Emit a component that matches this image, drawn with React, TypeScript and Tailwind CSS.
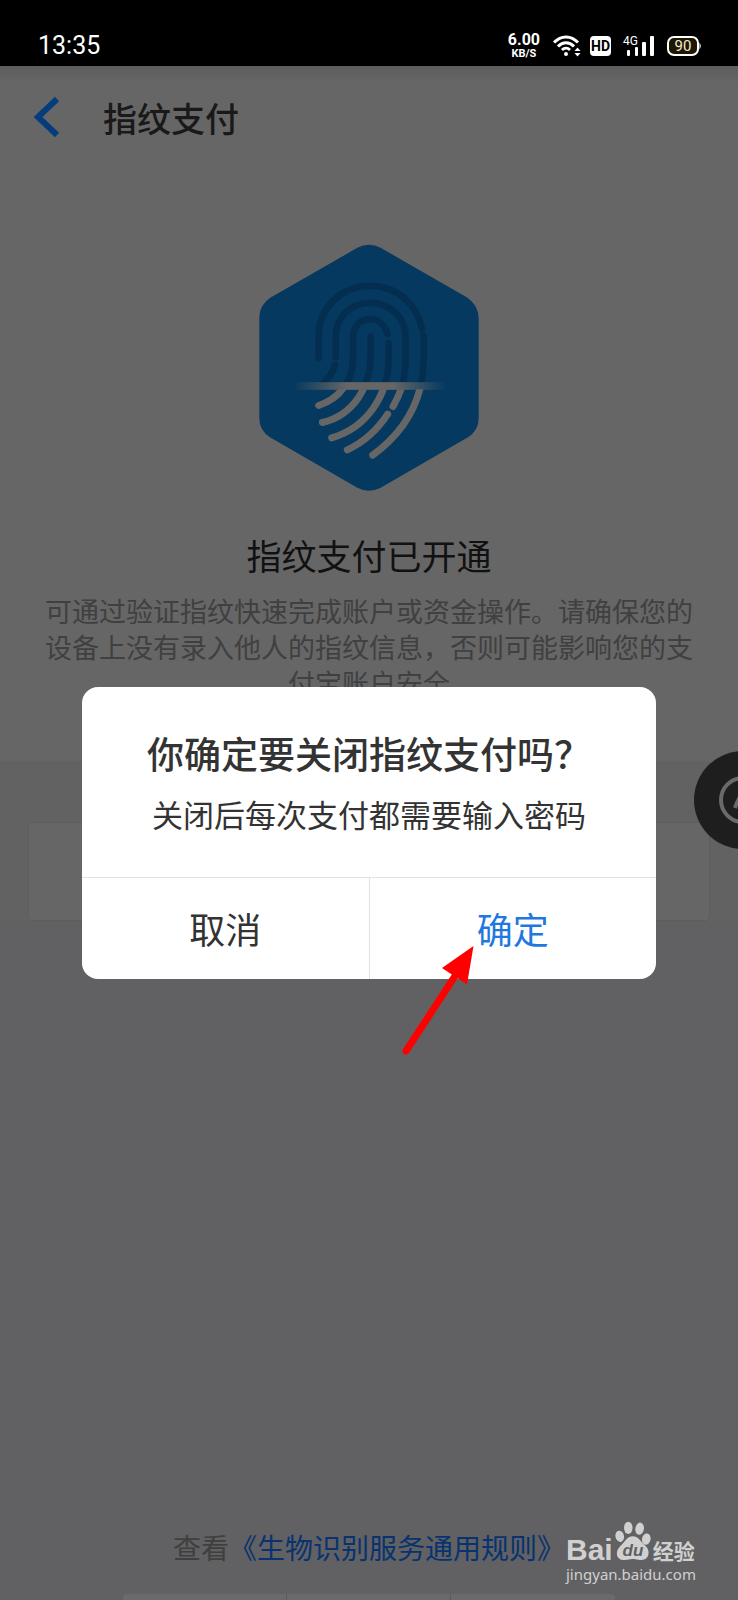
import type { ReactNode } from "react"

const StatusBar = () => {
    return (
        <header className="h-[66px] bg-black text-white flex items-center justify-between pt-[26px] pl-[38px] pr-9 font-['Roboto','Noto_Sans_CJK_SC',sans-serif]">
            <span className="text-[25px] leading-6">13:35</span>
            <div className="flex items-center">
                <div className="flex flex-col items-center font-bold mr-3">
                    <span className="text-[16px] leading-4">6.00</span>
                    <span className="text-[11px] leading-3">KB/S</span>
                </div>
                <svg width="30" height="22" viewBox="0 0 30 22" fill="none" stroke="#fff" strokeWidth="3" className="mr-2">
                    <path d="M2 7.5C9 0 19 0 26 7.5" />
                    <path d="M6 11.5C11 6.5 17 6.5 22 11.5" />
                    <path d="M10 15C12.5 12.5 15.5 12.5 18 15" />
                    <circle cx="14" cy="19" r="2" fill="#fff" stroke="none" />
                    <path d="M22.500 16l3-3.500 3 3.500zM22.500 18l3 3.500 3-3.500z" fill="#fff" stroke="none" />
                </svg>
                <span className="w-[21px] h-5 bg-white text-black rounded-sm text-[14px] leading-5 font-bold text-center mr-3">HD</span>
                <svg width="31" height="22" viewBox="0 0 31 22" fill="#fff" className="mr-3">
                    <text x="0" y="10" fontSize="12">4G</text>
                    <rect x="4" y="15" width="3" height="6" rx="1" />
                    <rect x="12" y="12" width="3" height="9" rx="1" />
                    <rect x="19" y="7" width="4" height="14" rx="1" />
                    <rect x="27" y="1" width="4" height="20" rx="1" />
                </svg>
                <svg width="36" height="22" viewBox="0 0 36 22">
                    <rect x="2" y="2" width="30" height="18" rx="6" fill="#1d1604" stroke="#fff" strokeWidth="2" />
                    <path d="M33.500 7.500Q36 11 33.500 14.500Z" fill="#fff" />
                    <text x="17" y="16" fontSize="15" textAnchor="middle" fill="#f5ecd0">90</text>
                </svg>
            </div>
        </header>
    )
}

const FingerprintLines = () => {
    return (
        <>
            <path d="M234 385V320C234 235 300 168 390 168C470 168 530 225 544 298" />
            <path d="M549 318V385C549 500 500 600 396 676" />
            <path d="M285 382V320C285 265 328 219 388 219C452 219 495 265 495 320V380C495 450 480 490 457 530" />
            <path d="M441 553C410 600 370 637 320 660" />
            <path d="M441 312C432 285 412 268 388 268C358 268 337 292 337 320V385C337 450 300 505 234 527" />
            <path d="M390 320V375C390 470 340 555 245 578" />
            <path d="M444 340V385C444 500 375 595 273 624" />
        </>
    )
}

const FingerprintBadge = () => {
    return (
        <svg width="220" height="247" viewBox="55 43 660 740" fill="none" strokeLinecap="round">
            <defs>
                <clipPath id="upper"><rect x="55" y="43" width="660" height="415" /></clipPath>
                <clipPath id="lower"><rect x="55" y="478" width="660" height="305" /></clipPath>
                <linearGradient id="scan">
                    <stop offset="0" stopColor="#666" stopOpacity="0" />
                    <stop offset="0.35" stopColor="#666" />
                    <stop offset="0.65" stopColor="#666" />
                    <stop offset="1" stopColor="#666" stopOpacity="0" />
                </linearGradient>
            </defs>
            <path
                d="M350 54Q385 35 420 54L678 202Q714 225 714 265V565Q714 602 682 622L420 774Q385 792 350 774L88 622Q56 602 56 565V262Q56 225 90 203Z"
                fill="#06395f"
            />
            <g clipPath="url(#upper)" stroke="#042e50" strokeWidth="20">
                <FingerprintLines />
                <path d="M283 405C276 432 262 450 240 466" />
            </g>
            <g clipPath="url(#lower)" stroke="#666" strokeWidth="21">
                <FingerprintLines />
            </g>
            <rect x="160" y="457" width="455" height="23" fill="url(#scan)" />
        </svg>
    )
}

const DialogButton = ({ className, children }: { className: string; children: ReactNode }) => {
    return (
        <button type="button" className={`flex-1 h-[101px] pb-[2px] text-[36px] leading-[48px] cursor-pointer ${className}`}>
            {children}
        </button>
    )
}

const ConfirmDialog = () => {
    return (
        <div className="absolute inset-0 top-[66px] flex items-center justify-center px-[82px]">
            <div role="dialog" aria-labelledby="dialog-title" className="relative w-full max-w-[574px] bg-white rounded-2xl text-[#333]">
                <div className="pt-[42px] pb-10 text-center">
                    <h2 id="dialog-title" className="text-[37px] leading-[48px] font-medium">你确定要关闭指纹支付吗？</h2>
                    <p className="pt-[14px] text-[31px] leading-[46px]">关闭后每次支付都需要输入密码</p>
                </div>
                <div className="flex border-t border-[#e2e2e2]">
                    <DialogButton className="border-r border-[#e2e2e2]">取消</DialogButton>
                    <DialogButton className="text-[#1e78e0]">确定</DialogButton>
                </div>
                <svg width="76" height="112" viewBox="0 0 76 112" className="absolute left-[318px] top-[256px]">
                    <path d="M6 108L55 33" stroke="#f00" strokeWidth="7" strokeLinecap="round" />
                    <path d="M73.500 3L42 25L67 41.500Z" fill="#f00" />
                </svg>
            </div>
        </div>
    )
}

const Watermark = () => {
    return (
        <div className="absolute right-10 bottom-4 w-[132px] text-[#d0d0d0]">
            <div className="flex items-end">
                <span className="font-['Liberation_Sans',sans-serif] font-bold text-[30px] leading-[28px]">Bai</span>
                <svg width="36" height="44" viewBox="0 0 38 44" fill="currentColor" className="mx-[2px]">
                    <ellipse cx="5" cy="16" rx="4.500" ry="6" transform="rotate(-12 5 16)" />
                    <ellipse cx="14" cy="7" rx="4.500" ry="6.500" />
                    <ellipse cx="26" cy="8" rx="4.500" ry="6.500" transform="rotate(10 26 8)" />
                    <ellipse cx="33" cy="19" rx="4.500" ry="6" transform="rotate(12 33 19)" />
                    <path d="M19 16C25 16 27 22 32 26C38 31 36 41 28 41C23 41 21 40 19 40C16 40 14 41 9 41C1 41 0 32 5 27C11 22 12 16 19 16Z" />
                    <text x="19" y="37" fontSize="18" fontStyle="italic" fontWeight="700" textAnchor="middle" fill="#606062" fontFamily="Liberation Sans">du</text>
                </svg>
                <span className="font-bold text-[21px] leading-[28px]">经验</span>
            </div>
            <p className="font-['Noto_Sans',sans-serif] text-[15px] leading-5">jingyan.baidu.com</p>
        </div>
    )
}

const App = () => {
    return (
        <main lang="zh-CN" className="relative min-h-screen flex flex-col overflow-hidden bg-[#616163] font-['Noto_Sans_CJK_SC',sans-serif]">
            <StatusBar />
            <section className="bg-[#666] pb-[60px] flex flex-col items-center">
                <div className="self-stretch h-4 bg-linear-to-b from-[#5d5d5d] to-[#666]"></div>
                <nav className="self-stretch flex items-center pl-8 pt-3">
                    <button type="button" aria-label="返回" className="mr-[42px] cursor-pointer">
                        <svg width="29" height="44" viewBox="0 0 29 44" fill="none" stroke="#053c7c" strokeWidth="6">
                            <path d="M25 3L6 21L25 39" />
                        </svg>
                    </button>
                    <h1 className="text-[34px] leading-[48px] text-[#191919] font-medium">指纹支付</h1>
                </nav>
                <div className="pt-[102px] pb-10">
                    <FingerprintBadge />
                </div>
                <h2 className="text-[35px] leading-[48px] text-[#111]">指纹支付已开通</h2>
                <p className="px-10 pt-[14px] text-[27px] leading-[36px] text-[#404040] text-center">
                    可通过验证指纹快速完成账户或资金操作。请确保您的设备上没有录入他人的指纹信息，否则可能影响您的支付宝账户安全
                </p>
            </section>
            <section className="bg-[#626262] pt-[61px] px-7">
                <div className="h-[99px] bg-[#666] border border-[#5d5d5d] rounded-sm"></div>
            </section>
            <footer className="mt-auto flex flex-col items-center">
                <p className="pb-[26px] text-[28px] leading-[42px] text-[#3f3f3f]">
                    查看<a href="#" className="text-[#08336f]">《生物识别服务通用规则》</a>
                </p>
                <div className="w-2/3 h-[6px] bg-[#6a6a6a] rounded-t-sm grid grid-cols-3 divide-x divide-[#5a5a5a]">
                    <span></span>
                    <span></span>
                    <span></span>
                </div>
            </footer>
            <button type="button" aria-label="辅助" className="absolute top-1/2 right-0 translate-x-[54px] -translate-y-1/2 size-[98px] rounded-full bg-[#1e1e1e] flex items-center justify-center">
                <svg width="48" height="48" viewBox="0 0 48 48" fill="none" stroke="#6a6a6a" strokeWidth="4">
                    <circle cx="24" cy="24" r="22" />
                    <path d="M16 32Q19 23 24 16Q29 23 32 32" />
                </svg>
            </button>
            <ConfirmDialog />
            <Watermark />
        </main>
    )
}
export default App
